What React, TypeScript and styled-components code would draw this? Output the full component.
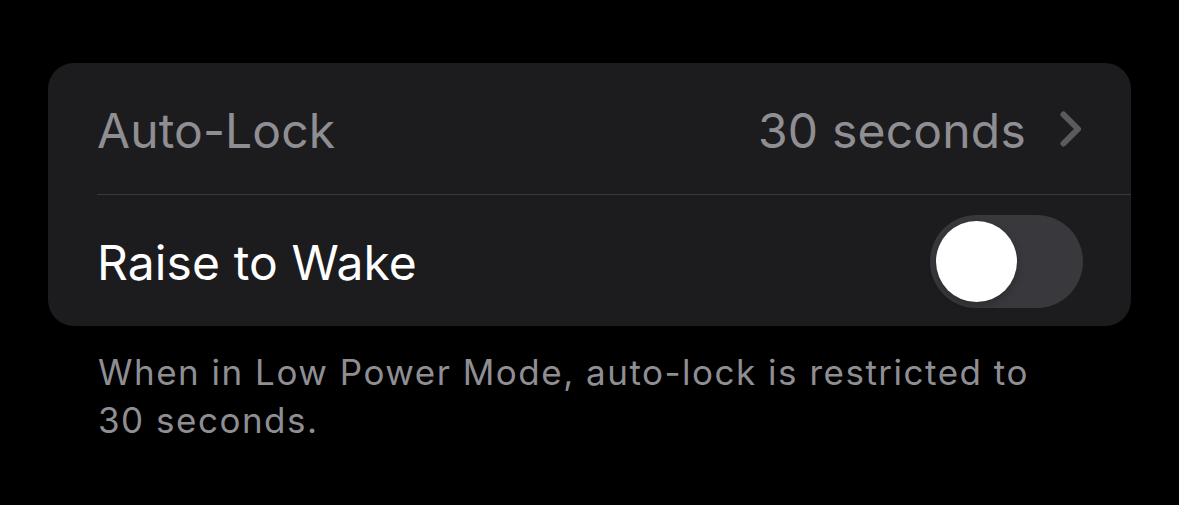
import styled, { createGlobalStyle } from "styled-components";
import { useState } from "react";

const GlobalStyle = createGlobalStyle`
    html, body {
        margin: 0;
        padding: 0;
        background: #000;
    }
    body {
        font-family: Inter, "Noto Sans", sans-serif;
        -webkit-font-smoothing: antialiased;
    }
`;

interface RowProps {
    divider?: boolean;
}

interface LabelProps {
    disabled?: boolean;
}

interface SwitchProps {
    on: boolean;
}

const App = () => {
    const [raise, setRaise] = useState<boolean>(false);

    return (
        <Page>
            <GlobalStyle />
            <Group>
                <Row>
                    <Label disabled>Auto-Lock</Label>
                    <Detail>
                        <Value>30 seconds</Value>
                        <Chevron viewBox="0 0 22 36">
                            <path d="M3.5 3.5 L18 18 L3.5 32.5" />
                        </Chevron>
                    </Detail>
                </Row>
                <Row divider>
                    <Label>Raise to Wake</Label>
                    <Switch on={raise} onClick={() => setRaise(!raise)}>
                        <Knob on={raise} />
                    </Switch>
                </Row>
            </Group>
            <Footer>
                When in Low Power Mode, auto-lock is restricted to
                <br></br>30 seconds.
            </Footer>
        </Page>
    );
};

const Page = styled.div`
    padding: 63px 48px 40px;
`;
const Group = styled.div`
    background: #1c1c1e;
    border-radius: 26px;
    overflow: hidden;
`;
const Row = styled.div<RowProps>`
    display: flex;
    align-items: center;
    justify-content: space-between;
    height: 131px;
    margin-left: 49px;
    padding-right: 48px;
    border-top: ${(props) => (props.divider ? "1px solid #38383a" : "none")};
`;
const Label = styled.span<LabelProps>`
    color: ${(props) => (props.disabled ? "#8e8e93" : "#ffffff")};
    font-size: 48px;
    font-weight: 400;
    letter-spacing: 0.1px;
    margin-top: 3px;
`;
const Detail = styled.div`
    display: flex;
    align-items: center;
    gap: 34px;
`;
const Value = styled.span`
    color: #8e8e93;
    font-size: 48px;
    letter-spacing: 0.2px;
    margin-top: 3px;
`;
const Chevron = styled.svg`
    width: 22px;
    height: 36px;
    margin-right: 1px;
    fill: none;
    stroke: #5b5b5f;
    stroke-width: 6;
    stroke-linecap: round;
    stroke-linejoin: round;
`;
const Switch = styled.button<SwitchProps>`
    position: relative;
    width: 153px;
    height: 93px;
    margin-top: 2px;
    border: none;
    padding: 0;
    border-radius: 47px;
    background: ${(props) => (props.on ? "#30d158" : "#39393d")};
    cursor: pointer;
`;
const Knob = styled.span<SwitchProps>`
    position: absolute;
    top: 6px;
    left: ${(props) => (props.on ? "66px" : "6px")};
    width: 81px;
    height: 81px;
    border-radius: 50%;
    background: #ffffff;
    box-shadow: 0 3px 8px rgba(0, 0, 0, 0.25);
    transition: left 0.2s;
`;
const Footer = styled.p`
    margin: 22px 0 0 50px;
    color: #8e8e93;
    font-size: 35px;
    line-height: 48px;
    letter-spacing: 1.5px;
`;

export default App;
